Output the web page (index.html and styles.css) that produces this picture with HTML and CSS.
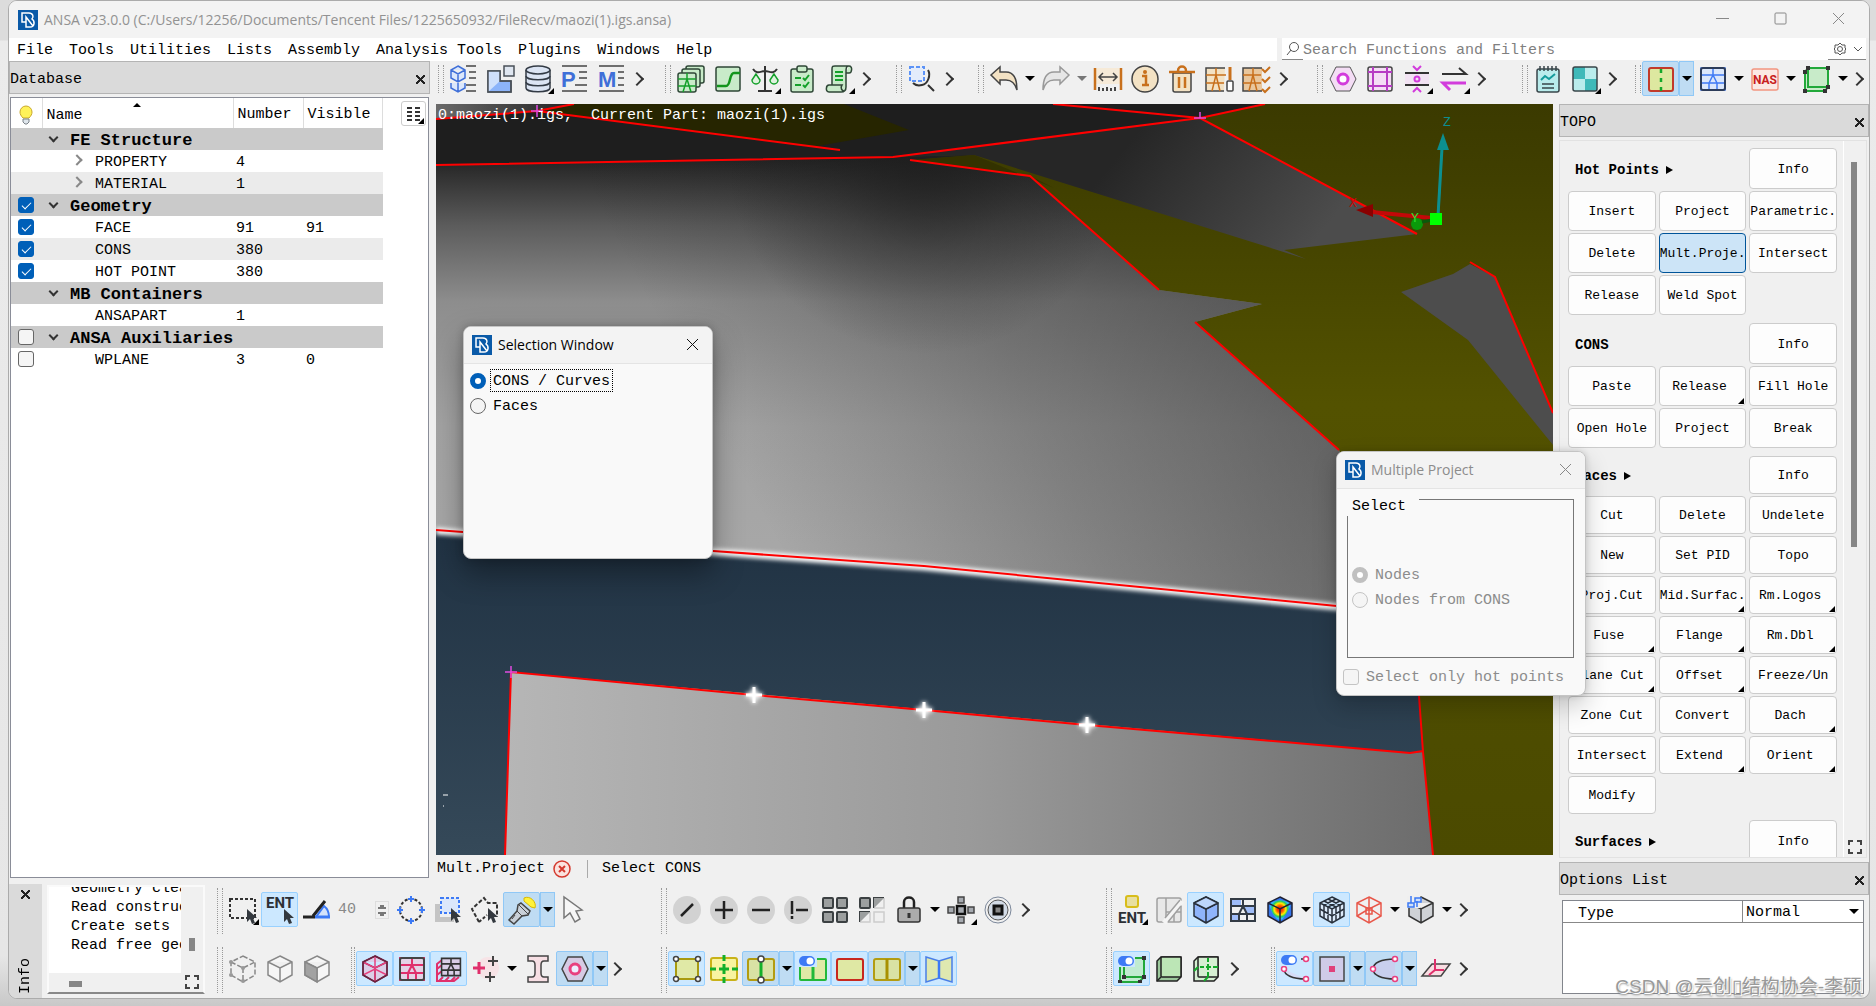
FILE: index.html
```html
<!DOCTYPE html>
<html lang="en">
<head>
  <meta charset="UTF-8">
  <title>ANSA v23.0.0</title>
  <link rel="stylesheet" href="styles.css">
</head>
<body>
<!-- shared shapes -->
<svg class="defs" width="0" height="0">
  <symbol id="logo" viewBox="0 0 20 20">
    <rect width="20" height="20" fill="#0a5aa8"/>
    <path d="M8 12H4V3h7c4 0 5 4 3 6 3 2 3 8-2 8H8V7l7 9" fill="none" stroke="#fff" stroke-width="1.500"/>
  </symbol>
  <symbol id="cube" viewBox="0 0 28 28">
    <path d="M14 1l12 6v13l-12 7-12-7V7zM2 7l12 6 12-6M14 13v14"/>
  </symbol>
  <symbol id="full" viewBox="0 0 14 14">
    <path d="M1 5V1h4M9 1h4v4M13 9v4H9M5 13H1V9" fill="none" stroke="#444" stroke-width="2"/>
  </symbol>
  <symbol id="mouse" viewBox="0 0 12 16">
    <path d="M1 0v13l3-3 2 5 3-1-2-5h4z" fill="#33383e"/>
  </symbol>
  <symbol id="mesh" viewBox="0 0 28 28">
    <path d="M2 3h24v22H2zM2 10h24M2 18h24M14 3v7M10 18v7M18 18v7M14 10l-4 8M14 10l4 8"/>
  </symbol>
  <symbol id="toggle" viewBox="0 0 16 10">
    <rect width="16" height="10" rx="5" fill="#3d7af5"/><circle cx="11" cy="5" r="3.500" fill="#fff"/>
  </symbol>
</svg>

<div class="window">
  <header class="titlebar">
    <svg class="logo"><use href="#logo"/></svg>
    <span>ANSA v23.0.0 (C:/Users/12256/Documents/Tencent Files/1225650932/FileRecv/maozi(1).igs.ansa)</span>
    <div class="sys">
      <button aria-label="Minimize"><svg width="13" height="13"><path d="M0 6.500h13"/></svg></button>
      <button aria-label="Maximize"><svg width="13" height="13"><rect x="1" y="1" width="11" height="11" rx="1"/></svg></button>
      <button aria-label="Close"><svg width="13" height="13"><path d="M1 1l11 11M12 1L1 12"/></svg></button>
    </div>
  </header>

  <div class="menubar">
    <nav>
      <a href="#">File</a><a href="#">Tools</a><a href="#">Utilities</a><a href="#">Lists</a><a href="#">Assembly</a><a href="#">Analysis Tools</a><a href="#">Plugins</a><a href="#">Windows</a><a href="#">Help</a>
    </nav>
    <div class="search">
      <svg width="13" height="15"><circle cx="8" cy="6" r="4.500"/><path d="M5 9l-4 5"/></svg>
      <input type="text" placeholder="Search Functions and Filters" aria-label="Search Functions and Filters">
      <svg width="14" height="14"><path d="M7 1l2 2h3v3l1 1-1 1v3H9l-2 2-2-2H2V8L1 7l1-1V3h3z"/><circle cx="7" cy="7" r="2.500"/></svg>
      <svg width="12" height="14"><path d="M2 5l4 4 4-4"/></svg>
    </div>
  </div>

  <main class="main">
    <!-- database panel -->
    <section class="database">
      <div class="dock-title">Database<button class="x" aria-label="Close"></button></div>
      <div class="tree">
        <table>
          <thead>
            <tr>
              <th class="c-vis"><svg width="14" height="20"><path d="M4 13C2 11 1 9 1 7a6 6 0 0 1 12 0c0 2-1 4-3 6z" fill="#fff25a" stroke="#c9a82a"/><path d="M4 14h6v3l-2 2H6l-2-2z" fill="#dfe6ec" stroke="#7b8288"/></svg></th>
              <th class="c-name sorted">Name</th>
              <th class="c-num">Number</th>
              <th class="c-shown">Visible</th>
            </tr>
          </thead>
          <tbody>
            <tr class="group"><td></td><td><i class="open"></i>FE Structure</td><td></td><td></td></tr>
            <tr><td></td><td class="child"><i class="shut"></i>PROPERTY</td><td>4</td><td></td></tr>
            <tr class="alt"><td></td><td class="child"><i class="shut"></i>MATERIAL</td><td>1</td><td></td></tr>
            <tr class="group"><td><input type="checkbox" aria-label="Geometry" checked></td><td><i class="open"></i>Geometry</td><td></td><td></td></tr>
            <tr><td><input type="checkbox" aria-label="FACE" checked></td><td class="child"><i></i>FACE</td><td>91</td><td>91</td></tr>
            <tr class="alt"><td><input type="checkbox" aria-label="CONS" checked></td><td class="child"><i></i>CONS</td><td>380</td><td></td></tr>
            <tr><td><input type="checkbox" aria-label="HOT POINT" checked></td><td class="child"><i></i>HOT POINT</td><td>380</td><td></td></tr>
            <tr class="group"><td></td><td><i class="open"></i>MB Containers</td><td></td><td></td></tr>
            <tr><td></td><td class="child"><i></i>ANSAPART</td><td>1</td><td></td></tr>
            <tr class="group"><td><input type="checkbox" aria-label="ANSA Auxiliaries"></td><td><i class="open"></i>ANSA Auxiliaries</td><td></td><td></td></tr>
            <tr><td><input type="checkbox" aria-label="WPLANE"></td><td class="child"><i></i>WPLANE</td><td>3</td><td>0</td></tr>
          </tbody>
        </table>
        <button class="columns corner" aria-label="Columns"><svg width="14" height="14"><path d="M0 1h5M8 1h5M0 5h5M8 5h5M0 9h5M8 9h5M0 13h5M8 13h5" stroke="#333" stroke-width="2"/></svg></button>
      </div>
    </section>

    <!-- top toolbars -->
    <div class="tools-top">
      <div class="bar">
        <button class="t" aria-label="Model browser"><svg viewBox="0 0 28 28" fill="#dbe7fb" stroke="#3f6fd8" stroke-width="1.500"><path d="M8 1l7 4v8l-7 4-7-4V5zM1 5l7 4 7-4M8 9v8M1 18v5l7 4 7-4v-5M8 18v8"/><path d="M16 1h10M19 7h7M19 13h7M16 20h10M16 26h10" stroke="#444"/></svg></button>
        <button class="t" aria-label="Parts"><svg viewBox="0 0 28 28" stroke="#4a5058" stroke-width="1.500"><path d="M1 6h12v10h11v11H1z" fill="#8cb4fa"/><path d="M1 6h12v10l-12 11z" fill="#cfe0fb" stroke="none"/><path d="M17 1h10v10H17z" fill="#dfe6f0"/><path d="M1 6h12v10h11v11H1z" fill="none"/></svg></button>
        <button class="t corner" aria-label="Data base"><svg viewBox="0 0 28 28" fill="#dbe4f3" stroke="#333b45" stroke-width="1.500"><path d="M2 5v18c0 5 24 5 24 0V5"/><ellipse cx="14" cy="5" rx="12" ry="4"/><path d="M2 11c0 5 24 5 24 0M2 17c0 5 24 5 24 0" fill="none"/></svg></button>
        <button class="t" aria-label="Properties"><svg viewBox="0 0 28 28"><path d="M1 1h25M18 7h8M18 13h8M14 20h12M1 26h25" stroke="#444" stroke-width="1.500"/><text x="0" y="22" class="pm">P</text></svg></button>
        <button class="t" aria-label="Materials"><svg viewBox="0 0 28 28"><path d="M1 1h25M20 7h6M20 13h6M20 20h6M1 26h25" stroke="#444" stroke-width="1.500"/><text x="0" y="22" class="pm">M</text></svg></button>
        <button class="more" aria-label="More"></button>
      </div>
      <div class="bar">
        <button class="t" aria-label="Sets"><svg viewBox="0 0 28 28" fill="#c8ebc9" stroke="#2e4636" stroke-width="1.500"><rect x="9" y="1" width="18" height="17" rx="2"/><rect x="5" y="4" width="18" height="18" rx="2"/><rect x="1" y="8" width="18" height="19" rx="2"/><path d="M1 14h18M1 21h18M10 8v6l-4 13M10 14l4 13" stroke="#14a02a" fill="none"/></svg></button>
        <button class="t" aria-label="Curves"><svg viewBox="0 0 28 28" stroke="#2e4636" stroke-width="1.500"><rect x="2" y="2" width="24" height="24" rx="2" fill="#c8ebc9"/><path d="M3 21h9c5 0 3-13 8-13h6" fill="none" stroke="#12951c" stroke-width="2.500"/></svg></button>
        <button class="t corner" aria-label="Compare"><svg viewBox="0 0 28 28" fill="none" stroke="#333" stroke-width="1.500"><path d="M14 1v25M7 26h14M2 4c4 6 8 2 12 2s8 4 12-2" stroke-width="2"/><path d="M5 9l-4 6a4 4 0 1 0 8 0zM23 9l-4 6a4 4 0 1 0 8 0z" stroke="#14a02a" fill="#dff2df"/></svg></button>
        <button class="t" aria-label="Checks"><svg viewBox="0 0 28 28" fill="#c8ebc9" stroke="#2e4636" stroke-width="1.500"><rect x="3" y="4" width="22" height="23" rx="2"/><rect x="9" y="1" width="10" height="6" rx="2"/><path d="M7 13h6M7 20h6M15 13l2 2 4-5M15 20l2 2 4-5" stroke="#14a02a" stroke-width="2" fill="none"/></svg></button>
        <button class="t corner" aria-label="Scripts"><svg viewBox="0 0 28 28" fill="#c8ebc9" stroke="#2e4636" stroke-width="1.500"><path d="M7 20V4c0-3 1-3 3-3h14c-3 0-3 2-3 7v14c0 4-2 5-5 5H4c-4 0-3-7 0-7h13c-2 3 0 6 2 6M24 1c4 0 3 7 0 7h-3"/><path d="M10 7h8M10 11h8M10 15h8" stroke="#14a02a" stroke-width="2"/></svg></button>
        <button class="more" aria-label="More"></button>
      </div>
      <div class="bar">
        <button class="t" aria-label="Zoom area"><svg viewBox="0 0 28 28" fill="none" stroke="#333" stroke-width="2"><rect x="2" y="2" width="14" height="14" stroke="#5c93f7" stroke-dasharray="4 2" fill="#e3ecfb"/><path d="M20 5c3 5 0 14-6 15-4 1-7 0-9-2M20 20l6 6"/></svg></button>
        <button class="more" aria-label="More"></button>
      </div>
      <div class="bar">
        <button class="t" aria-label="Undo"><svg viewBox="0 0 28 28" fill="#f3e2c4" stroke="#444" stroke-width="1.500"><path d="M1 10l9-8v5h6c8 0 11 6 11 18-2-7-5-10-11-10h-6v4z"/></svg></button>
        <button class="drop" aria-label="Undo list"></button>
        <button class="t" aria-label="Redo"><svg viewBox="0 0 28 28" fill="#e6e6e6" stroke="#999" stroke-width="1.500"><path d="M27 10l-9-8v5h-6C4 7 1 13 1 25c2-7 5-10 11-10h6v4z"/></svg></button>
        <button class="drop dim" aria-label="Redo list"></button>
        <button class="t" aria-label="Measure"><svg viewBox="0 0 28 28" fill="none" stroke="#444" stroke-width="1.500"><path d="M2 3h24v16H2z" fill="#f6ead8" stroke="none"/><path d="M1 3v22M27 3v22" stroke="#c8701c" stroke-width="2.500"/><path d="M5 12h18M9 8l-4 4 4 4M19 8l4 4-4 4"/><path d="M5 22v4M9 23v3M13 22v4M17 23v3M21 22v4" stroke-width="2"/></svg></button>
        <button class="t" aria-label="Info"><svg viewBox="0 0 28 28"><circle cx="14" cy="14" r="13" fill="#f3e2c4" stroke="#444" stroke-width="1.500"/><path d="M11 11h4v9M11 20h7" fill="none" stroke="#c8701c" stroke-width="2.500"/><circle cx="14" cy="7" r="2" fill="#c8701c"/></svg></button>
        <button class="t" aria-label="Delete"><svg viewBox="0 0 28 28" fill="#f3e2c4" stroke="#444" stroke-width="1.500"><path d="M5 8h18v17c0 1-1 2-2 2H7c-1 0-2-1-2-2z"/><path d="M1 7h26M10 6c0-6 8-6 8 0M11 12v11M17 12v11" stroke="#c8701c" stroke-width="2.500" fill="none"/></svg></button>
        <button class="t" aria-label="Fix quality"><svg viewBox="0 0 28 28" fill="#f3e2c4" stroke="#444" stroke-width="1.500"><path d="M20 3H1v23h18"/><path d="M1 10h20M1 18h18M11 3v7l-4 16M11 10l4 16" fill="none" stroke="#c8701c"/><path d="M25 2v13" stroke="#c8701c" stroke-width="3"/><rect x="22" y="16" width="6" height="10" rx="1" fill="#fff"/></svg></button>
        <button class="t" aria-label="Check quality"><svg viewBox="0 0 28 28" fill="#e9c79d" stroke="#444" stroke-width="1.500"><path d="M20 3H1v23h19"/><path d="M1 10h18M1 18h18M11 3v7l-4 16M11 10l4 16" fill="none" stroke="#c8701c"/><path d="M20 4l3 3 5-5M20 14l3 3 5-5M20 24l3 3 5-5" fill="none" stroke="#c8701c" stroke-width="2"/></svg></button>
        <button class="more" aria-label="More"></button>
      </div>
      <div class="bar">
        <button class="t" aria-label="Bolt"><svg viewBox="0 0 28 28"><path d="M7 2h14l6 12-6 12H7L1 14z" fill="#f4ddf5" stroke="#555"/><circle cx="14" cy="14" r="5" fill="#fff" stroke="#d23cdc" stroke-width="3"/></svg></button>
        <button class="t" aria-label="Frame"><svg viewBox="0 0 28 28"><rect x="2" y="2" width="24" height="24" rx="2" fill="#f4ddf5" stroke="#444" stroke-width="1.500"/><path d="M7 2v24M21 2v24M2 7h24M2 21h24" stroke="#b73cc4" stroke-width="2"/></svg></button>
        <button class="t corner" aria-label="Connect"><svg viewBox="0 0 28 28" fill="none" stroke="#d23cdc" stroke-width="2"><path d="M2 9h24v10H2z" fill="#f2e3f3" stroke="none"/><path d="M2 8h24M2 20h24" stroke="#333"/><circle cx="14" cy="14" r="2.500"/><path d="M10 1l4 4 4-4M10 27l4-4 4 4"/></svg></button>
        <button class="t corner" aria-label="Swap"><svg viewBox="0 0 28 28" fill="none" stroke-width="2"><path d="M2 9h24l-7-6" stroke="#333"/><path d="M26 18H3l7 7" stroke="#d23cdc" stroke-width="3"/></svg></button>
        <button class="more" aria-label="More"></button>
      </div>
      <div class="bar">
        <button class="t" aria-label="Report"><svg viewBox="0 0 28 28" stroke="#39454a" stroke-width="1.500"><rect x="3" y="4" width="22" height="23" rx="2" fill="#b9ecec"/><path d="M6 1v5M10 1v5M14 1v5M18 1v5M22 1v5M8 19h12M8 23h12"/><path d="M7 15l4-4 4 3 6-5" fill="none" stroke="#159c9c" stroke-width="2"/></svg></button>
        <button class="t corner" aria-label="Layout"><svg viewBox="0 0 28 28"><rect x="2" y="2" width="24" height="24" rx="2" fill="#b9ecec"/><path d="M2 2h12v12H2zM14 14h12v12H14z" fill="#3fb9b9"/><rect x="2" y="2" width="24" height="24" rx="2" fill="none" stroke="#39454a" stroke-width="1.500"/></svg></button>
        <button class="more" aria-label="More"></button>
      </div>
      <div class="bar">
        <button class="t on2" aria-label="Topo"><svg viewBox="0 0 28 28"><rect x="2" y="3" width="24" height="23" rx="2" fill="#dde8a0" stroke="#c23a2a" stroke-width="2"/><path d="M14 4v22" stroke="#14a82a" stroke-width="2.500" stroke-dasharray="4 5"/></svg></button>
        <button class="drop on2" aria-label="Topo list"></button>
        <button class="t" aria-label="Mesh"><svg viewBox="0 0 28 28" fill="#dbe7fb" stroke="#3f7af5" stroke-width="1.500"><use href="#mesh"/><rect x="2" y="3" width="24" height="22" rx="2" fill="none" stroke="#2c3c5a" stroke-width="2"/></svg></button>
        <button class="drop" aria-label="Mesh list"></button>
        <button class="t" aria-label="Nastran"><svg viewBox="0 0 28 28"><rect x="1" y="4" width="26" height="21" rx="2" fill="#fbe9e4" stroke="#f29580" stroke-width="1.500"/><text x="14" y="19" class="nas">NAS</text></svg></button>
        <button class="drop" aria-label="Deck list"></button>
        <button class="t" aria-label="Morph"><svg viewBox="0 0 28 28" stroke="#22a83a" stroke-width="2"><path d="M5 3h20v19l-3 4H2V7z" fill="#c8ebc9"/><path d="M5 3v19h20" fill="none"/><path d="M3 1h4v4H3zM23 1h4v4h-4zM0 5h4v4H0zM23 20h4v4h-4zM0 24h4v4H0zM20 24h4v4h-4z" fill="#333" stroke="none"/></svg></button>
        <button class="drop" aria-label="Morph list"></button>
        <button class="more" aria-label="More"></button>
      </div>
    </div>

    <!-- 3d view -->
    <section class="view">
      <svg class="scene" viewBox="0 0 1117 751" preserveAspectRatio="none">
        <defs>
          <linearGradient id="olive" x1="0" y1="0" x2="0" y2="1"><stop offset="0" stop-color="#3b3a00"/><stop offset=".1" stop-color="#403f00"/><stop offset=".4" stop-color="#535200"/><stop offset="1" stop-color="#4b4a00"/></linearGradient>
          <linearGradient id="shell" gradientUnits="userSpaceOnUse" x1="0" y1="55" x2="0" y2="500"><stop offset="0" stop-color="#232323"/><stop offset=".15" stop-color="#5c5c5c"/><stop offset=".32" stop-color="#8d8d8d"/><stop offset=".6" stop-color="#a3a3a3"/><stop offset="1" stop-color="#a9a9a9"/></linearGradient>
          <linearGradient id="shade" gradientUnits="userSpaceOnUse" x1="330" y1="420" x2="830" y2="150"><stop offset="0" stop-color="#1e1e1e" stop-opacity="0"/><stop offset=".5" stop-color="#1e1e1e" stop-opacity=".28"/><stop offset="1" stop-color="#2a2a2a" stop-opacity=".55"/></linearGradient>
          <radialGradient id="dark" gradientUnits="userSpaceOnUse" cx="490" cy="50" r="200"><stop offset="0" stop-color="#1e1e1e" stop-opacity=".8"/><stop offset=".5" stop-color="#1e1e1e" stop-opacity=".3"/><stop offset="1" stop-color="#1e1e1e" stop-opacity="0"/></radialGradient>
          <linearGradient id="facet" gradientUnits="userSpaceOnUse" x1="700" y1="30" x2="860" y2="160"><stop offset="0" stop-color="#262626"/><stop offset="1" stop-color="#4c4c4c"/></linearGradient>
          <linearGradient id="blue" x1="0" y1="0" x2="0" y2="1"><stop offset="0" stop-color="#203243"/><stop offset="1" stop-color="#354959"/></linearGradient>
          <linearGradient id="low" x1="0" y1="0" x2="1" y2="0"><stop offset="0" stop-color="#b6b6b6"/><stop offset=".5" stop-color="#9a9a9a"/><stop offset="1" stop-color="#6c6c6c"/></linearGradient>
          <linearGradient id="corner"><stop offset="0" stop-color="#6a6a6a"/><stop offset="1" stop-color="#222"/></linearGradient>
          <filter id="glow" x="-10%" y="-50%" width="120%" height="200%"><feGaussianBlur stdDeviation="2"/></filter>
        </defs>
        <rect width="1117" height="751" fill="url(#olive)"/>
        <path d="M0 0h829l-65 14-307 39L0 61z" fill="#1e1e1e"/>
        <path d="M0 0h138l-37 7L0 15z" fill="url(#corner)"/>
        <path d="M101 7l37-7h270l65 26-97 17z" fill="#262500"/>
        <g>
          <path d="M0 61l457-8 81-2-64 5 120 16 129 114 103 14-67 18 144 128 70 166-485-50L0 426z" fill="url(#shell)"/>
          <path d="M0 61l457-8 81-2-64 5 120 16 129 114 103 14-67 18 144 128 70 166-485-50L0 426z" fill="url(#shade)"/>
          <path d="M0 61l457-8 81-2-64 5 120 16 129 114 103 14-67 18 144 128 70 166-485-50L0 426z" fill="url(#dark)"/>
        </g>
        <path d="M457 53l307-39 217 116-133 16 22 9L538 51z" fill="url(#facet)"/>
        <path d="M474 56l64-5 80 33-24-12z" fill="#333200"/>
        <path d="M1034 160l25 13 58 136v32l-85-105-67-48 52-18z" fill="#4d4d4d"/>
        <path d="M0 426l277 21 211 15 485 47 10 83 4 56-13 1L75 568l-6 183H0z" fill="url(#blue)"/>
        <path d="M75 568l899 81 13-1 10 103H69z" fill="url(#low)"/>
        <path d="M0 427l277 21 211 15 485 47" fill="none" stroke="#fff" stroke-width="7" filter="url(#glow)"/>
        <g fill="none" stroke="#f00" stroke-width="2">
          <path d="M0 61l457-8 307-39 65-14M617 0l147 14 217 116M0 15l101-8 37-7M101 7l303 39M474 56l120 16 129 114M759 218l144 128M1034 158l25 15 58 136"/>
          <path d="M0 426l277 21 211 15 485 47M69 751l6-183 243 23 170 15 163 15 323 28 13-2M983 592l4 56 10 103"/>
        </g>
        <path d="M101 1v12M95 7h12M764 8v6M758 14h12M75 562v12M69 568h12" stroke="#e04be0" stroke-width="1.500"/>
        <path d="M310 591h16M318 583v16M480 606h16M488 598v16M643 621h16M651 613v16" stroke="#fff" stroke-width="5" filter="url(#glow)"/>
        <path d="M310 591h16M318 583v16M480 606h16M488 598v16M643 621h16M651 613v16" stroke="#fff" stroke-width="3"/>
        <path d="M7 691h5M7 702h1" stroke="#fff"/>
        <!-- axes -->
        <path d="M1002 112l4-68" stroke="#0c8f90" stroke-width="3"/>
        <path d="M1007 29l-6 17h12z" fill="#0c8f90"/>
        <path d="M936 108l60 6" stroke="#c40808" stroke-width="4"/>
        <path d="M920 106l17-6v13z" fill="#8a0000"/>
        <circle cx="981" cy="120" r="6" fill="#0a9a0a"/>
        <path d="M986 118l10-2" stroke="#0a5a0a" stroke-width="3"/>
        <path d="M994 109h12v12h-12z" fill="#0f0"/>
        <text x="1007" y="22" fill="#0c8f90">Z</text>
        <text x="913" y="103" fill="#c40808">X</text>
        <text x="975" y="118" fill="#2ee02e">Y</text>
      </svg>
      <p class="overlay">0:maozi(1).igs,&nbsp; Current Part: maozi(1).igs</p>
    </section>
    <div class="status">
      <span>Mult.Project</span>
      <button aria-label="Cancel"><svg width="18" height="18"><circle cx="9" cy="9" r="8" fill="#fbe3df" stroke="#d4392e" stroke-width="1.500"/><path d="M6 6l6 6M12 6l-6 6" stroke="#d4392e" stroke-width="2"/></svg></button>
      <span class="prompt">Select CONS</span>
    </div>

    <!-- info console and lower toolbars -->
    <div class="bottom">
      <div class="info-tab"><button class="x" aria-label="Close"></button><span>Info</span></div>
      <div class="console">
        <pre>  Geometry clean
  Read construct
  Create sets
  Read free geom</pre>
        <i class="v"></i><i class="h"></i>
        <svg width="14" height="14"><use href="#full"/></svg>
      </div>
      <div class="tools-bottom">
        <div class="row">
          <div class="bar">
            <button class="t corner" aria-label="Box select"><svg viewBox="0 0 28 28"><rect x="1" y="3" width="25" height="19" fill="none" stroke="#333" stroke-width="2" stroke-dasharray="3 2"/><use href="#mouse" x="17" y="13" width="12" height="16"/></svg></button>
            <button class="t on" aria-label="Entity select"><svg viewBox="0 0 28 28"><text x="14" y="12" class="ent">ENT</text><use href="#mouse" x="17" y="13" width="12" height="16"/></svg></button>
            <button class="t" aria-label="Angle"><svg viewBox="0 0 28 28"><path d="M13 21l8-11c4 3 5 7 5 11z" fill="#d5e3fa" stroke="#3d7af5" stroke-width="2"/><path d="M22 5L10 20M0 21h12" stroke="#222" stroke-width="3"/><path d="M12 21h15" stroke="#3d7af5" stroke-width="3"/></svg></button>
            <label class="spin"><input type="text" value="40" aria-label="Angle value" disabled><span></span></label>
            <button class="t" aria-label="Circle select"><svg viewBox="0 0 28 28" fill="none"><circle cx="14" cy="14" r="11" stroke="#333" stroke-width="2" stroke-dasharray="3 2"/><path d="M14 0v6M11 3h6M14 22v6M11 25h6M0 14h6M3 11v6M22 14h6M25 11v6" stroke="#3d7af5" stroke-width="2"/></svg></button>
            <button class="t" aria-label="Visible select"><svg viewBox="0 0 28 28"><path d="M1 8v18h19v-5H6V8z" fill="#c4c4c4"/><rect x="7" y="2" width="18" height="15" fill="#dbe7fb" stroke="#3d7af5" stroke-width="2" stroke-dasharray="3 2"/><use href="#mouse" x="16" y="12" width="12" height="16"/></svg></button>
            <button class="t" aria-label="Polygon select"><svg viewBox="0 0 28 28"><path d="M8 26L1 13 13 2l4 5h9v14" fill="none" stroke="#333" stroke-width="2" stroke-dasharray="4 2"/><path d="M8 26l8-7" stroke="#333" stroke-width="2" stroke-dasharray="3 2"/><use href="#mouse" x="16" y="12" width="12" height="16"/></svg></button>
            <button class="t on2" aria-label="Highlight"><svg viewBox="0 0 28 28"><path d="M16 2c6-3 13 4 11 10l-4-1-7-6z" fill="#fff23a" stroke="#d9b800"/><path d="M13 7l9 8-2 4-6 1-8 8-5-4 8-9 1-6z" fill="#c9d0d8" stroke="#444" stroke-width="1.500"/><path d="M11 9l9 9M9 15l5 5M7 19l-3 4" stroke="#444"/></svg></button>
            <button class="drop on2" aria-label="Highlight list"></button>
            <button class="t" aria-label="Pointer"><svg viewBox="0 0 28 28"><path d="M4 1v21l6-5 5 9 5-3-4-8 6-1z" fill="#f6f6f6" stroke="#777" stroke-width="1.500"/></svg></button>
          </div>
          <div class="bar">
            <button class="t" aria-label="Invert"><svg viewBox="0 0 28 28"><circle cx="14" cy="14" r="14" fill="#d2d2d2"/><path d="M8 20L20 8" stroke="#222" stroke-width="2.500"/></svg></button>
            <button class="t" aria-label="Add"><svg viewBox="0 0 28 28"><circle cx="14" cy="14" r="14" fill="#d2d2d2"/><path d="M5 14h18M14 5v18" stroke="#222" stroke-width="2.500"/></svg></button>
            <button class="t" aria-label="Remove"><svg viewBox="0 0 28 28"><circle cx="14" cy="14" r="14" fill="#d2d2d2"/><path d="M5 14h18" stroke="#222" stroke-width="2.500"/></svg></button>
            <button class="t" aria-label="Only"><svg viewBox="0 0 28 28"><circle cx="14" cy="14" r="14" fill="#d2d2d2"/><path d="M12 14h12M8 5v13M8 20v3" stroke="#222" stroke-width="2.500"/></svg></button>
            <button class="t" aria-label="All"><svg viewBox="0 0 28 28" fill="#9c9f9f" stroke="#3b4042" stroke-width="2"><rect x="2" y="2" width="10" height="10" rx="1"/><rect x="16" y="2" width="10" height="10" rx="1"/><rect x="2" y="16" width="10" height="10" rx="1"/><rect x="16" y="16" width="10" height="10" rx="1"/></svg></button>
            <button class="t" aria-label="Swap visible"><svg viewBox="0 0 28 28"><rect x="2" y="2" width="10" height="10" rx="1" fill="#9c9f9f" stroke="#3b4042" stroke-width="2"/><path d="M16 12V2h10M2 26V16h10" fill="none" stroke="#3b4042" stroke-width="2"/><path d="M16 12V2h10zM2 26V16h10z" fill="#9c9f9f"/><path d="M26 2v10H16M12 16v10H2M16 16h10v10H16z" fill="none" stroke="#ccc" stroke-width="1.500"/></svg></button>
            <button class="t" aria-label="Lock"><svg viewBox="0 0 28 28"><path d="M9 13V6c0-6 10-6 10 0v7" fill="none" stroke="#222" stroke-width="2.500"/><rect x="3" y="12" width="22" height="14" rx="2" fill="#acacac" stroke="#333" stroke-width="1.500"/><path d="M14 17v5" stroke="#333" stroke-width="3"/></svg></button>
            <button class="drop" aria-label="Lock list"></button>
            <button class="t corner" aria-label="Neighbours"><svg viewBox="0 0 28 28" fill="#a6aab0" stroke="#444" stroke-width="1.500"><path d="M11 1h6v6h-6zM11 21h6v6h-6zM1 11h6v6H1zM21 11h6v6h-6z"/><path d="M10 10h8v8h-8z" stroke="#111" stroke-width="2.500"/></svg></button>
            <button class="t" aria-label="Around"><svg viewBox="0 0 28 28" fill="none" stroke="#7b879a"><circle cx="14" cy="14" r="13"/><circle cx="14" cy="14" r="10" fill="#d3dbe6" stroke="#555"/><path d="M10 10h8v8h-8z" fill="#888" stroke="#111" stroke-width="3"/></svg></button>
            <button class="more" aria-label="More"></button>
          </div>
          <div class="bar">
            <button class="t corner" aria-label="Entity color"><svg viewBox="0 0 28 28"><rect x="8" y="0" width="12" height="11" rx="2" fill="#e8dfa0" stroke="#d8bd1a" stroke-width="2"/><text x="14" y="27" class="ent">ENT</text></svg></button>
            <button class="t" aria-label="Split view"><svg viewBox="0 0 28 28" fill="none" stroke="#a0a0a0" stroke-width="1.500"><rect x="2" y="2" width="24" height="24" rx="2" fill="#e8e8e8"/><path d="M11 2v24M11 16h15M19 16v10"/><path d="M27 5L9 27" stroke="#f4f4f4" stroke-width="5"/><path d="M26 10L13 26M25 4L10 22"/></svg></button>
            <button class="t on" aria-label="Shaded"><svg viewBox="0 0 28 28" stroke="#28303c" stroke-width="1.500" stroke-linejoin="round"><g fill="#8fb4fb"><use href="#cube"/></g><path d="M14 1l12 6-12 6L2 7z" fill="#bcd5fb"/></svg></button>
            <button class="t" aria-label="Patches"><svg viewBox="0 0 28 28"><path d="M3 3h9v7H3zM16 10h10v8H16zM3 18h7v7H3z" fill="#9fbcf8"/><g fill="none" stroke="#333b45" stroke-width="2"><use href="#mesh"/></g></svg></button>
            <button class="t" aria-label="Fringe"><svg viewBox="0 0 28 28"><defs><radialGradient id="fr" cx="14" cy="13" r="13" gradientUnits="userSpaceOnUse"><stop offset="0" stop-color="#e00"/><stop offset=".25" stop-color="#f50"/><stop offset=".45" stop-color="#fe0"/><stop offset=".6" stop-color="#2c6"/><stop offset=".75" stop-color="#3bf"/><stop offset=".9" stop-color="#3577ee"/></radialGradient></defs><path d="M14 1l12 6v13l-12 7-12-7V7z" fill="#3577ee"/><path d="M2 7l12-3 12 3-6 11-6 9-7-9z" fill="url(#fr)"/><g fill="none" stroke="#223" stroke-width="1.500"><use href="#cube"/></g></svg></button>
            <button class="drop" aria-label="Fringe list"></button>
            <button class="t on" aria-label="Shell mesh"><svg viewBox="0 0 28 28" stroke="#28303c" stroke-width="1.500"><g fill="#dceafa"><use href="#cube"/></g><path d="M2 13l12 7 12-7M6 5l12 6v13M10 3l12 6v13M22 5L10 11v13M18 3L6 9v13" fill="none"/></svg></button>
            <button class="t" aria-label="Wireframe"><svg viewBox="0 0 28 28" stroke="#e8574a" stroke-width="1.500" fill="none"><use href="#cube"/><path d="M14 1v13M2 20l10-6h5l9 6M11 12h6v6h-6z"/></svg></button>
            <button class="drop" aria-label="Wireframe list"></button>
            <button class="t" aria-label="View options"><svg viewBox="0 0 28 28" stroke="#333" stroke-width="1.500"><g fill="#cfd2d6"><use href="#cube"/></g><path d="M0 0h13v12H0z" fill="#efefef" stroke="none"/><path d="M4 0v7M10 5v6M1 7h6v4H1zM8 2h6v4H8z" fill="#cfe0fb" stroke="#3d7af5"/></svg></button>
            <button class="drop" aria-label="View option list"></button>
            <button class="more" aria-label="More"></button>
          </div>
        </div>
        <div class="row">
          <div class="bar">
            <button class="t" aria-label="Nodes"><svg viewBox="0 0 28 28" stroke="#888" stroke-width="1.500" fill="none"><g stroke-dasharray="5 2"><use href="#cube"/></g><g fill="#999" stroke="none"><circle cx="2" cy="7" r="2"/><circle cx="14" cy="13" r="2"/><circle cx="2" cy="20" r="2"/><circle cx="14" cy="26" r="2"/></g></svg></button>
            <button class="t" aria-label="Edges"><svg viewBox="0 0 28 28" stroke="#888" stroke-width="1.500" fill="#f6f6f6"><use href="#cube"/></svg></button>
            <button class="t gap" aria-label="Faces"><svg viewBox="0 0 28 28" stroke="#888" stroke-width="1.500" fill="#f6f6f6"><use href="#cube"/><path d="M2 7l12 6v14L2 20z" fill="#a2a2a2"/></svg></button>
            <span class="grip"></span>
            <button class="t on" aria-label="Volumes"><svg viewBox="0 0 28 28" stroke="#6b2340" stroke-width="1.500" fill="#dccfe8"><use href="#cube"/><path d="M2 7l12 6 12-6M14 13v14M14 1v12M2 20l12-6 12 6" stroke="#e8407f" fill="none"/><path d="M14 1l12 6v13l-12 7-12-7V7z" fill="none"/></svg></button>
            <button class="t on" aria-label="Shells"><svg viewBox="0 0 28 28" stroke="#e0306c" stroke-width="2" fill="#e4d3e6"><use href="#mesh"/><rect x="2" y="3" width="24" height="22" rx="2" fill="none" stroke="#444"/></svg></button>
            <button class="t on" aria-label="Solids"><svg viewBox="0 0 28 28" stroke="#333" stroke-width="2" fill="#d9cde6"><path d="M7 5L2 9v17h17l5-4M2 14l5-4M2 20l5-4M4 26l4-4M10 26l4-4M16 26l4-4" stroke="#e0306c" fill="none"/><use href="#mesh" x="5" y="0" width="22" height="24"/></svg></button>
            <button class="t" aria-label="Points"><svg viewBox="0 0 28 28" fill="none" stroke="#444" stroke-width="2"><circle cx="16" cy="13" r="11" fill="#f7e3e6" stroke="none"/><path d="M1 13h12M7 7v12" stroke="#e0306c" stroke-width="3"/><path d="M16 6h10M21 1v10M13 22h10M18 17v10"/></svg></button>
            <button class="drop" aria-label="Point list"></button>
            <button class="t" aria-label="Beams"><svg viewBox="0 0 28 28"><path d="M4 1h20v5h-4c-3 0-3 2-3 4v8c0 2 0 4 3 4h4v5H4v-5h4c3 0 3-2 3-4v-8c0-2 0-4-3-4H4z" fill="#f7dfe4" stroke="#444" stroke-width="1.500"/></svg></button>
            <button class="t on2" aria-label="Bolts"><svg viewBox="0 0 28 28"><path d="M7 2h14l6 12-6 12H7L1 14z" fill="#d6cbe4" stroke="#444" stroke-width="1.500"/><circle cx="14" cy="14" r="5" fill="#eef" stroke="#e8407f" stroke-width="3"/></svg></button>
            <button class="drop on2" aria-label="Bolt list"></button>
            <button class="more" aria-label="More"></button>
          </div>
          <div class="bar">
            <button class="t on" aria-label="Hot points"><svg viewBox="0 0 28 28"><rect x="3" y="4" width="22" height="20" fill="#e0e9a6" stroke="#a89a10" stroke-width="2"/><g fill="#fff" stroke="#444" stroke-width="1.500"><circle cx="3" cy="4" r="2.500"/><circle cx="25" cy="4" r="2.500"/><circle cx="3" cy="24" r="2.500"/><circle cx="25" cy="24" r="2.500"/></g></svg></button>
            <button class="t" aria-label="Cross hatch"><svg viewBox="0 0 28 28"><rect x="1" y="3" width="26" height="22" rx="2" fill="#f8f4a0" stroke="#c9b218" stroke-width="2"/><path d="M14 0v6M14 9v10M14 22v6M0 14h6M9 14h10M22 14h6" stroke="#14b02a" stroke-width="3"/></svg></button>
            <button class="t on2" aria-label="Double cons"><svg viewBox="0 0 28 28"><rect x="1" y="4" width="26" height="21" rx="2" fill="#d9e2a4" stroke="#b39c10" stroke-width="2"/><path d="M14 4v20" stroke="#14b02a" stroke-width="3"/><g fill="#fff" stroke="#444" stroke-width="1.500"><circle cx="14" cy="4" r="3"/><circle cx="14" cy="25" r="3"/></g></svg></button>
            <button class="drop on2" aria-label="Double list"></button>
            <button class="t on" aria-label="Toggle cons"><svg viewBox="0 0 28 28"><rect x="1" y="4" width="26" height="21" rx="1" fill="#e0e9a6" stroke="#22b83a" stroke-width="2"/><path d="M14 4v20" stroke="#22b83a" stroke-width="3"/><rect x="-1" y="-1" width="19" height="13" fill="#cce8ff"/><use href="#toggle" x="0" y="1" width="16" height="10"/></svg></button>
            <button class="t on" aria-label="Single"><svg viewBox="0 0 28 28"><rect x="1" y="4" width="26" height="21" rx="2" fill="#dfe8a4" stroke="#c8281e" stroke-width="2"/></svg></button>
            <button class="t on2" aria-label="Double"><svg viewBox="0 0 28 28"><rect x="1" y="4" width="26" height="21" rx="2" fill="#d9e2a4" stroke="#b39c10" stroke-width="2"/><path d="M14 4v20" stroke="#a89000" stroke-width="3"/></svg></button>
            <button class="drop on2" aria-label="Double faces"></button>
            <button class="t on" aria-label="Fold"><svg viewBox="0 0 28 28"><path d="M1 2l13 4 13-4v25l-13-4-13 4z" fill="#dfe8b0" stroke="#4a7fe8" stroke-width="1.500"/><path d="M14 6v17" stroke="#3d7af5" stroke-width="2.500"/></svg></button>
          </div>
          <div class="bar">
            <button class="t on" aria-label="Toggle morph"><svg viewBox="0 0 28 28"><path d="M6 3h19v19l-4 5H2V8z" fill="#c0ecd0"/><path d="M16 3h10v19H6V8M2 12v15h19l5-5" fill="none" stroke="#22a83a" stroke-width="2"/><path d="M24 1h4v4h-4zM24 20h4v4h-4zM4 20h4v4H4zM0 25h4v3H0zM20 25h4v3h-4z" fill="#333"/><rect x="-1" y="-1" width="18" height="13" fill="#cce8ff"/><use href="#toggle" x="0" y="1" width="16" height="10"/></svg></button>
            <button class="t" aria-label="Box"><svg viewBox="0 0 28 28" fill="#9cc99c" stroke="#222" stroke-width="1.500"><path d="M6 2h20v20l-4 4H2V6z"/><rect x="6" y="2" width="20" height="20" rx="1" fill="#bce6b6"/><path d="M2 26l4-4"/></svg></button>
            <button class="t" aria-label="Box mesh"><svg viewBox="0 0 28 28" fill="#d6efd2" stroke="#222" stroke-width="1.500"><path d="M6 2h20v20l-4 4H2V6z"/><rect x="6" y="2" width="20" height="20" rx="1"/><path d="M16 3v4M16 9v6M16 17v5M8 12h4M14 12h5M21 12h5M2 16l4-4M12 26l4-4" stroke="#14a82a" stroke-width="2"/></svg></button>
            <button class="more wide" aria-label="More"></button>
            <span class="grip"></span>
            <button class="t on" aria-label="Toggle curves"><svg viewBox="0 0 28 28" fill="#fff" stroke="#e8407f" stroke-width="1.500"><path d="M25 4h-5M3 14c0 6 8 10 22 10" fill="#d5dcf6" stroke="#333"/><circle cx="25" cy="4" r="2.500"/><circle cx="3" cy="14" r="2.500"/><circle cx="25" cy="24" r="2.500"/><rect x="-1" y="-1" width="17" height="12" fill="#cce8ff" stroke="none"/><use href="#toggle" x="0" y="0" width="16" height="10" stroke="none"/></svg></button>
            <button class="t on2" aria-label="Point"><svg viewBox="0 0 28 28"><rect x="2" y="2" width="24" height="24" fill="#cfcbe8" stroke="#444" stroke-width="1.500"/><path d="M11 11h6v6h-6z" fill="#e0407a"/></svg></button>
            <button class="drop on2" aria-label="Point options"></button>
            <button class="t on2" aria-label="Curve"><svg viewBox="0 0 28 28" fill="#fff" stroke="#e8407f" stroke-width="1.500"><path d="M25 4C11 4 3 8 3 14s8 10 22 10" fill="#c8cfee" stroke="#333"/><circle cx="25" cy="4" r="2.500"/><circle cx="3" cy="14" r="2.500"/><circle cx="25" cy="24" r="2.500"/></svg></button>
            <button class="drop on2" aria-label="Curve options"></button>
            <button class="t" aria-label="Work plane"><svg viewBox="0 0 28 28" fill="#f8dde2" stroke="#444" stroke-width="1.500"><path d="M0 21l10-12h18L19 21z"/><path d="M13 4v11h9M13 15l-6 5" stroke="#e0306c" fill="none" stroke-width="2"/></svg></button>
            <button class="more" aria-label="More"></button>
          </div>
        </div>
      </div>
    </div>

    <!-- TOPO buttons and options -->
    <aside class="dock">
      <div class="dock-title">TOPO<button class="x" aria-label="Close"></button></div>
      <div class="topo">
        <div class="groups">
          <div class="group-box">
            <h3 class="arrow">Hot Points</h3><button>Info</button>
            <button>Insert</button><button>Project</button><button>Parametric.</button>
            <button>Delete</button><button class="active">Mult.Proje.</button><button>Intersect</button>
            <button>Release</button><button>Weld Spot</button>
          </div>
          <div class="group-box">
            <h3>CONS</h3><button>Info</button>
            <button>Paste</button><button class="corner">Release</button><button>Fill Hole</button>
            <button>Open Hole</button><button>Project</button><button>Break</button>
          </div>
          <div class="group-box small">
            <h3 class="arrow">Faces</h3><button>Info</button>
            <button>Cut</button><button>Delete</button><button>Undelete</button>
            <button>New</button><button>Set PID</button><button>Topo</button>
            <button>Proj.Cut</button><button class="corner">Mid.Surfac.</button><button class="corner">Rm.Logos</button>
            <button class="corner">Fuse</button><button class="corner">Flange</button><button class="corner">Rm.Dbl</button>
            <button class="corner">Plane Cut</button><button class="corner">Offset</button><button>Freeze/Un</button>
            <button>Zone Cut</button><button>Convert</button><button class="corner">Dach</button>
            <button>Intersect</button><button class="corner">Extend</button><button class="corner">Orient</button>
            <button>Modify</button>
          </div>
          <div class="group-box">
            <h3 class="arrow">Surfaces</h3><button>Info</button>
          </div>
        </div>
        <div class="scroll"><i></i><svg width="16" height="14"><use href="#full"/></svg></div>
      </div>
      <div class="dock-title">Options List<button class="x" aria-label="Close"></button></div>
      <div class="options">
        <div class="option">
          <label for="type">Type</label>
          <div class="pick"><select id="type"><option>Normal</option></select></div>
        </div>
      </div>
    </aside>
  </main>
</div>

<!-- floating windows -->
<div class="dialog selection">
  <div class="head"><svg class="logo"><use href="#logo"/></svg>Selection Window<button aria-label="Close"><svg width="13" height="13"><path d="M1 1l11 11M12 1L1 12"/></svg></button></div>
  <div class="body">
    <label><input type="radio" name="sel" checked><span class="focus">CONS / Curves</span></label>
    <label><input type="radio" name="sel"><span>Faces</span></label>
  </div>
</div>

<div class="dialog project">
  <div class="head"><svg class="logo"><use href="#logo"/></svg>Multiple Project<button aria-label="Close"><svg width="13" height="13"><path d="M1 1l11 11M12 1L1 12"/></svg></button></div>
  <div class="body">
    <fieldset>
      <legend>Select</legend>
      <label><input type="radio" name="nodes" checked disabled><span>Nodes</span></label>
      <label><input type="radio" name="nodes" disabled><span>Nodes from CONS</span></label>
    </fieldset>
    <label><input type="checkbox" disabled><span>Select only hot points</span></label>
  </div>
</div>

<p class="watermark">CSDN @云创▯结构协会-李硕</p>
</body>
</html>
```

FILE: styles.css
```css
* {
  box-sizing: border-box;
  margin: 0;
  padding: 0;
}

body {
  height: 100vh;
  overflow: hidden;
  background: linear-gradient(#dcdcdc 0, #dcdcdc 40px, #ebebeb 41px, #e6e6e6 95%, #c8c8c8 100%);
  font: 15px/18px "Liberation Mono", "Noto Sans CJK SC", monospace;
  color: #000;
  position: relative;
}

button, input, select {
  font: inherit;
  color: inherit;
}

button {
  border: 0;
  background: none;
}

a {
  color: inherit;
  text-decoration: none;
}

.defs {
  position: absolute;
}

.logo {
  width: 20px;
  height: 20px;
}

.window {
  display: flex;
  flex-direction: column;
  height: calc(100vh - 7px);
  margin: 0 6px 0 8px;
  border: 1px solid #ababab;
  border-radius: 9px;
  background: #f0f0f0;
  overflow: hidden;
}

/* title and menu */
.titlebar {
  display: flex;
  align-items: center;
  gap: 6px;
  height: 37px;
  padding-left: 9px;
  background: #f3f3f3;
  color: #929292;
  font: 14px/20px "Open Sans", sans-serif;
}

.sys {
  display: flex;
  margin-right: 2px;
  margin-left: auto;
}

.sys button {
  width: 58px;
  height: 36px;
}

.sys svg, .dialog .head button svg {
  fill: none;
  stroke: #888;
}

.menubar {
  display: flex;
  gap: 5px;
  height: 23px;
  padding-right: 3px;
}

.menubar nav {
  display: flex;
  flex: 1;
  gap: 16px;
  padding: 4px 0 0 8px;
  background: #fff;
  white-space: nowrap;
}

.search {
  display: flex;
  align-items: center;
  gap: 5px;
  width: 584px;
  height: 22px;
  padding: 0 2px 0 4px;
  border-bottom: 1px solid #868686;
  background: #fff;
}

.search svg {
  fill: none;
  stroke: #555;
}

.search input {
  flex: 1;
  border: 0;
  padding-top: 4px;
  margin-left: -1px;
  outline: 0;
}

.search input::placeholder {
  color: #808080;
}

/* main grid */
.main {
  display: grid;
  flex: 1;
  min-height: 0;
  grid-template-columns: 427px minmax(0, 1fr) 316px;
  grid-template-rows: 43px minmax(0, 1fr) 29px 114px;
}

.database {
  display: flex;
  flex-direction: column;
  gap: 3px;
  grid-area: 1 / 1 / 4 / 2;
  padding: 0 6px 6px 0;
}

.tools-top {
  display: grid;
  grid-area: 1 / 2 / 2 / 4;
  grid-template-columns: 227fr 231fr 82fr 339fr 205fr 113fr 236fr;
}

.view {
  grid-area: 2 / 2 / 3 / 3;
  position: relative;
}

.status {
  display: flex;
  align-items: center;
  gap: 8px;
  grid-area: 3 / 2 / 4 / 3;
  padding: 0 1px 2px;
}

.status button, .status svg {
  display: block;
}

.status .prompt {
  margin-left: 8px;
  padding-left: 14px;
  border-left: 1px solid #aaa;
}

.bottom {
  display: flex;
  grid-area: 4 / 1 / 5 / 3;
}

.dock {
  display: flex;
  flex-direction: column;
  grid-area: 2 / 3 / 5 / 4;
  padding-left: 6px;
  min-height: 0;
}

.dock-title {
  display: flex;
  align-items: center;
  justify-content: space-between;
  flex: none;
  height: 33px;
  padding: 4px 1px 0 0;
  border: 1px solid #b4b4b4;
  background: #dadada;
}

.x {
  width: 12px;
  height: 12px;
  margin-right: 2px;
  background:
    linear-gradient(45deg, transparent 44%, #222 44%, #222 56%, transparent 56%),
    linear-gradient(-45deg, transparent 44%, #222 44%, #222 56%, transparent 56%);
  background-size: 9px 9px;
  background-position: center;
  background-repeat: no-repeat;
}

/* database tree */
.tree {
  display: flex;
  align-items: flex-start;
  justify-content: space-between;
  flex: 1;
  padding-right: 2px;
  margin: 0 1px;
  border: 1px solid #8a8d98;
  background: #fff;
}

.tree table {
  width: 372px;
  border-collapse: collapse;
  table-layout: fixed;
}

.tree th {
  height: 30px;
  padding: 4px 0 0 4px;
  border-right: 1px solid #ddd;
  font-weight: normal;
  text-align: left;
}

.tree .c-vis {
  width: 31px;
  padding: 4px 0 0 8px;
}

.c-vis svg {
  display: block;
}

.tree .c-name {
  width: 191px;
}

.c-num {
  width: 70px;
}

.sorted::after {
  content: "";
  display: block;
  width: 0;
  margin: -22px 0 17px 86px;
  border: 4px solid transparent;
  border-top: 0;
  border-bottom-color: #000;
}

.tree td {
  height: 22px;
  padding: 4px 0 0 3px;
  line-height: 18px;
  white-space: nowrap;
}

.tree td:first-child {
  padding: 0 0 0 7px;
}

.group td {
  background: #cacaca;
  font-size: 17px;
  font-weight: bold;
}

.alt td {
  background: #ebebeb;
}

.tree i {
  display: inline-block;
  width: 8px;
  height: 8px;
  margin: 0 14px 2px 4px;
}

.tree .open {
  width: 7px;
  height: 7px;
  margin: 0 13px 4px 5px;
  border: solid #333;
  border-width: 0 2px 2px 0;
  transform: rotate(45deg);
}

.tree .child {
  padding-left: 27px;
}

.tree .shut {
  border: solid #888;
  border-width: 2px 2px 0 0;
  transform: rotate(45deg);
}

input[type=checkbox], input[type=radio] {
  appearance: none;
  display: block;
  flex: none;
  width: 16px;
  height: 16px;
  border: 1px solid #666;
  border-radius: 3px;
  background: #f5f5f5;
}

input[type=radio] {
  border-radius: 50%;
}

input[type=checkbox]:checked {
  border-color: #005fb8;
  background: #005fb8;
}

input[type=checkbox]:checked::after {
  content: "";
  display: block;
  width: 8px;
  height: 4px;
  margin: 4px 0 0 3px;
  border: solid #fff;
  border-width: 0 0 1px 1px;
  transform: rotate(-45deg);
}

input[type=radio]:checked {
  border: 5px solid #005fb8;
  background: #fff;
}

input:disabled {
  border-color: #c4c4c4;
}

input[type=radio]:checked:disabled {
  border-color: #c0c0c0;
}

.columns {
  width: 25px;
  height: 25px;
  margin-top: 3px;
  border: 1px solid #ccc;
  border-radius: 3px;
}

.columns svg {
  display: block;
  margin: auto;
}

/* small black triangle of buttons with a fly-out */
.corner {
  position: relative;
}

.corner::after {
  content: "";
  position: absolute;
  right: 1px;
  bottom: 1px;
  border: 3px solid #000;
  border-top-color: transparent;
  border-left-color: transparent;
}

/* toolbars */
.bar {
  display: flex;
  align-items: flex-start;
  height: 35px;
  min-width: 0;
}

.bar::before, .grip {
  content: "";
  flex: none;
  width: 4px;
  height: 28px;
  margin: 4px 1px 0 2px;
  border: dotted #999;
  border-width: 0 1px;
}

.row .bar::before, .row .grip {
  height: 46px;
  margin-top: -4px;
}

.bar .t {
  flex: none;
  width: 37px;
  height: 35px;
  padding: 3px;
  border: 1px solid transparent;
  border-radius: 2px;
}

.bar .gap {
  margin-right: 14px;
}

.t svg {
  display: block;
  width: 28px;
  height: 28px;
  margin: auto;
  overflow: visible;
}

.bar .on {
  border-color: #99d1ff;
  background: #cce8ff;
}

.bar .on2 {
  border: 1px solid #90c8f6;
  background: #bfdcf3;
}

.drop {
  flex: none;
  width: 15px;
  height: 35px;
}

.drop::before {
  content: "";
  display: block;
  width: 0;
  margin: auto;
  border: 5px solid transparent;
  border-top: 5px solid #000;
  border-bottom: 0;
}

.drop.dim::before {
  border-top-color: #777;
}

.more {
  flex: none;
  width: 14px;
  height: 35px;
}

.more.wide {
  width: 45px;
  padding-right: 30px;
}

.more::before {
  content: "";
  display: block;
  width: 8px;
  height: 8px;
  margin: auto;
  border: solid #333;
  border-width: 2px 2px 0 0;
  transform: rotate(45deg);
}

.pm {
  font: bold 22px "Liberation Sans", sans-serif;
  fill: #3f6fd8;
}

.nas {
  font: bold 12px Roboto, sans-serif;
  fill: #c81e1e;
  text-anchor: middle;
}

.ent {
  font: bold 15px Roboto, sans-serif;
  fill: #2c3035;
  text-anchor: middle;
}

/* 3d view */
.scene {
  display: block;
  width: 100%;
  height: 100%;
  font-size: 13px;
}

.overlay {
  position: absolute;
  top: 3px;
  left: 2px;
  color: #fff;
}

/* bottom strip */
.info-tab {
  display: flex;
  flex-direction: column;
  justify-content: space-between;
  align-items: center;
  width: 33px;
  padding: 4px 0 4px;
  background: #dadada;
}

.info-tab .x {
  margin: 0;
}

.info-tab span {
  writing-mode: vertical-rl;
  transform: rotate(180deg);
}

.console {
  display: grid;
  grid-template-columns: 1fr 22px;
  grid-template-rows: 1fr 21px;
  width: 158px;
  margin: 1px 0 4px 5px;
  border: 2px solid #fafafa;
  border-bottom-color: #888;
}

.console pre {
  display: flex;
  align-items: flex-end;
  height: 86px;
  padding: 0 0 18px 4px;
  background: #fff;
  font: 15px/19px "Liberation Mono", monospace;
  overflow: hidden;
}

.console .v {
  align-self: end;
  justify-self: center;
  width: 6px;
  height: 13px;
  margin-bottom: 22px;
  background: #868686;
}

.console .h {
  align-self: center;
  width: 13px;
  height: 6px;
  margin-left: 20px;
  background: #868686;
}

.console svg {
  margin: 2px 0 0 4px;
}

.tools-bottom {
  flex: 1;
  min-width: 0;
  padding: 8px 0 0 10px;
}

.row {
  display: grid;
  grid-template-columns: 444fr 445fr 449fr;
  height: 59px;
}

.spin {
  display: flex;
  align-items: center;
  width: 57px;
  height: 26px;
  margin-top: 5px;
}

.spin input {
  width: 40px;
  padding-left: 3px;
  border: 0;
  background: none;
  color: #888;
}

.spin span {
  width: 14px;
  height: 18px;
  border: 1px solid #ddd;
  background:
    linear-gradient(#777, #777) center 3px / 4px 2px no-repeat,
    linear-gradient(#777, #777) center 5px / 8px 2px no-repeat,
    linear-gradient(#777, #777) center 10px / 8px 2px no-repeat,
    linear-gradient(#777, #777) center 12px / 4px 2px no-repeat;
}

/* TOPO */
.topo {
  display: flex;
  flex: 1;
  min-height: 0;
  margin: 3px 2px 4px 0;
  border: 1px solid #e2e2e2;
  overflow: hidden;
}

.groups {
  flex: 1;
  padding: 7px 6px 0 8px;
  border-right: 1px solid #fff;
}

.group-box {
  display: grid;
  grid-template-columns: repeat(3, minmax(0, 1fr));
  grid-template-rows: 41px;
  grid-auto-rows: 40px;
  gap: 2px 3px;
  margin-bottom: 8px;
}

.small {
  grid-template-rows: 38px;
  grid-auto-rows: 38px;
  margin-bottom: 6px;
}

.group-box h3 {
  grid-column: span 2;
  align-self: center;
  padding: 2px 0 0 7px;
  font-size: 14px;
}

.arrow::after {
  content: "";
  display: inline-block;
  margin-left: 7px;
  border: 4px solid transparent;
  border-left: 7px solid #000;
  border-right: 0;
}

.group-box button {
  padding-top: 2px;
  border: 1px solid #ccc;
  border-radius: 4px;
  background: #fdfdfd;
  font-size: 13px;
  white-space: nowrap;
}

.group-box button.corner {
  padding-right: 6px;
}

.group-box button.active {
  border-color: #005499;
  background: #cce4f7;
}

.scroll {
  display: flex;
  flex-direction: column;
  justify-content: space-between;
  width: 22px;
  padding: 21px 0 3px 3px;
}

.scroll i {
  width: 6px;
  height: 385px;
  margin-left: 4px;
  background: #868686;
}

/* options */
.options {
  height: 94px;
  margin: 5px 5px 4px 3px;
  border: 1px solid #82858c;
  background: #fff;
}

.option {
  display: flex;
  height: 22px;
  border-bottom: 1px solid #888;
}

.option label {
  flex: 1;
  padding: 4px 0 0 15px;
  border-right: 1px solid #888;
}

.pick {
  display: flex;
  align-items: center;
  width: 120px;
  padding-right: 4px;
}

.pick::after {
  content: "";
  border: 5px solid transparent;
  border-top: 5px solid #000;
  border-bottom: 0;
}

.pick select {
  appearance: none;
  flex: 1;
  padding: 2px 0 0 3px;
  border: 0;
  background: none;
}

/* dialogs */
.dialog {
  position: absolute;
  width: 250px;
  border: 1px solid #c4c4c4;
  border-radius: 8px;
  background: #f9f9f9;
  box-shadow: 0 14px 30px rgba(0, 0, 0, .35), 0 0 8px rgba(0, 0, 0, .2);
  overflow: hidden;
}

.selection {
  top: 326px;
  left: 463px;
  height: 233px;
}

.project {
  top: 451px;
  left: 1336px;
  height: 245px;
  box-shadow: 0 10px 24px rgba(0, 0, 0, .2), 0 0 6px rgba(0, 0, 0, .15);
}

.dialog .head {
  display: flex;
  align-items: center;
  gap: 6px;
  height: 37px;
  padding: 0 13px 1px 8px;
  border-bottom: 1px solid #e4e4e4;
  background: #f3f3f3;
  font: 14px/20px "Open Sans", sans-serif;
}

.dialog .head button {
  margin-left: auto;
  height: 16px;
}

.dialog .head button svg {
  display: block;
}

.selection .head button svg {
  stroke: #111;
}

.project .head {
  color: #8c8c8c;
}

.dialog label {
  display: flex;
  align-items: center;
  gap: 4px;
  height: 25px;
}

.dialog label span {
  padding: 3px 2px 0;
  border: 1px solid transparent;
}

.dialog .focus {
  border: 1px dotted #000;
}

.selection .body {
  padding: 4px 6px;
}

.project .body {
  padding: 10px 6px;
  color: #8c8c8c;
}

.project fieldset {
  height: 159px;
  margin: 0 5px 6px 4px;
  padding: 62px 4px 0;
  border: 1px solid #777;
  position: relative;
}

.project legend {
  position: absolute;
  top: -2px;
  left: -1px;
  width: 72px;
  padding-left: 5px;
  background: #f9f9f9;
  color: #000;
}

.watermark {
  position: absolute;
  right: 14px;
  bottom: 7px;
  color: #999;
  font: 19px/24px "Liberation Sans", "Noto Sans CJK SC", sans-serif;
  text-shadow: 1px 1px 0 #fff, 1px 2px 2px #888;
}
```
